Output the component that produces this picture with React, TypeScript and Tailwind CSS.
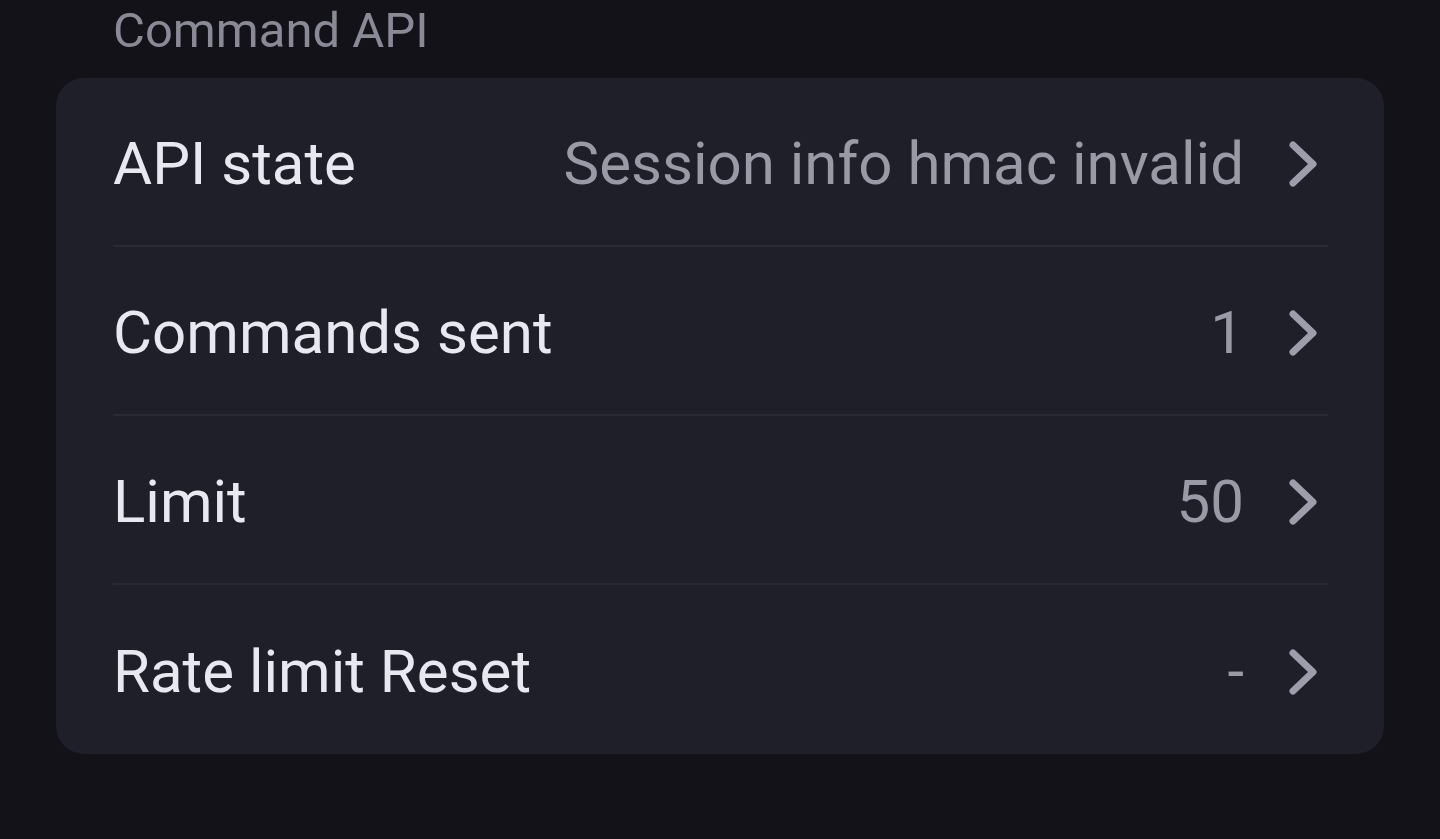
const rows = [
  { label: "API state", value: "Session info hmac invalid" },
  { label: "Commands sent", value: "1" },
  { label: "Limit", value: "50" },
  { label: "Rate limit Reset", value: "-" },
];

function Chevron() {
  return (
    <svg width="30" height="48" viewBox="0 0 30 48" fill="none" className="text-[#9d9dab]">
      <polyline
        points="5,5 25,24 5,43"
        stroke="currentColor"
        strokeWidth="7"
        strokeLinecap="round"
        strokeLinejoin="round"
      />
    </svg>
  );
}

export default function App() {
  return (
    <div
      className="min-h-[839px] w-full bg-[#121218] px-[56px] pt-[6px]"
      style={{ fontFamily: "Roboto, 'Noto Sans', sans-serif" }}
    >
      <div className="pl-[57px] text-[49px] leading-none text-[#8a8a96] h-[72px]">Command API</div>
      <div className="rounded-[28px] bg-[#1f1f29] pl-[57px] pr-[56px]">
        {rows.map((r, i) => (
          <div
            key={r.label}
            className={`flex h-[169px] items-center justify-between pt-[4px] ${
              i < rows.length - 1 ? "border-b-2 border-[#2a2a35]" : ""
            }`}
          >
            <span className="text-[60px] text-[#e8e8f0]">{r.label}</span>
            <div className="flex items-center gap-[44px] pr-[10px]">
              <span className="text-[60px] text-[#9a9aa7]">{r.value}</span>
              <Chevron />
            </div>
          </div>
        ))}
      </div>
    </div>
  );
}
